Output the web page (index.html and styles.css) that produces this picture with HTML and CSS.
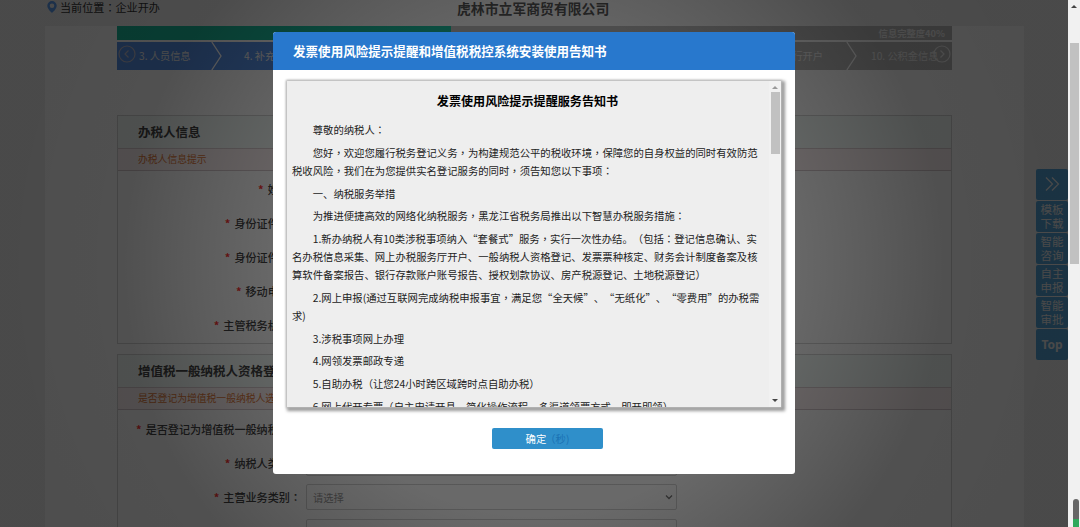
FILE: index.html
```html
<!DOCTYPE html>
<html lang="zh-CN">
<head>
<meta charset="utf-8">
<title>企业开办</title>
<link rel="stylesheet" href="styles.css">
</head>
<body>
<div class="window">
  <div class="page">
    <header class="top">
      <div class="crumb">
        <svg class="pin" viewBox="0 0 10 12"><path fill="#5a9cf0" fill-rule="evenodd" d="M5 0a4.700 4.700 0 0 0-4.700 4.700C.3 8 5 12 5 12s4.700-4 4.700-7.300A4.700 4.700 0 0 0 5 0zm0 2.400a2.300 2.300 0 1 1 0 4.600 2.300 2.300 0 0 1 0-4.600z"/></svg>
        <span>当前位置<span class="mid" lang="zh-TW">：</span>企业开办</span>
      </div>
      <h1 class="company">虎林市立军商贸有限公司</h1>
    </header>
    <main class="sheet">
      <div class="progress"><div class="done"></div><span class="percent">信息完整度40%</span></div>
      <nav class="steps">
        <div class="step active first">
          <svg class="circle" viewBox="0 0 18 18"><circle cx="9" cy="9" r="8"/><path d="M10.500 5.500 7 9l3.500 3.500"/></svg>
          <span>3. 人员信息</span>
        </div>
        <svg class="chevron" viewBox="0 0 12 28"><path class="chev-blue" d="M0 0h12v28H0z"/><path class="chev-line" d="M.8 0 10 14 .8 28"/></svg>
        <div class="step active second"><span>4. 补充信息</span></div>
        <div class="step ninth"><span>9. 银行开户</span></div>
        <svg class="chevron" viewBox="0 0 12 28"><path class="chev-gray" d="M0 0h12v28H0z"/><path class="chev-line" d="M.8 0 10 14 .8 28"/></svg>
        <div class="step last">
          <span>10. 公积金信息</span>
          <svg class="circle" viewBox="0 0 18 18"><circle cx="9" cy="9" r="8"/><path d="M7.500 5.500 11 9l-3.500 3.500"/></svg>
        </div>
      </nav>
      <section class="panel agent">
        <h2>办税人信息</h2>
        <p class="tip">办税人信息提示</p>
        <div class="rows">
          <div class="row"><label><i>*</i>姓名：</label></div>
          <div class="row"><label><i>*</i>身份证件号：</label></div>
          <div class="row"><label><i>*</i>身份证件号：</label></div>
          <div class="row"><label><i>*</i>移动电话：</label></div>
          <div class="row"><label><i>*</i>主管税务机关：</label></div>
        </div>
      </section>
      <section class="panel vat">
        <h2>增值税一般纳税人资格登记</h2>
        <p class="tip">是否登记为增值税一般纳税人选择</p>
        <div class="rows">
          <div class="row"><label><i>*</i>是否登记为增值税一般纳税人：</label></div>
          <div class="row"><label><i>*</i>纳税人类别：</label><div class="field"></div></div>
          <div class="row"><label><i>*</i>主营业务类别<span class="mid" lang="zh-TW">：</span></label><div class="field"><span>请选择</span><svg viewBox="0 0 8 6"><path d="M1 1.500 4 4.500 7 1.500"/></svg></div></div>
          <div class="row"><label></label><div class="field"></div></div>
        </div>
      </section>
    </main>
    <aside class="side">
      <div class="tool"><svg viewBox="0 0 16 16"><path d="M2 1.500 8.500 8 2 14.500M8 1.500 14.500 8 8 14.500"/></svg></div>
      <div class="tool">模板<br>下载</div>
      <div class="tool">智能<br>咨询</div>
      <div class="tool">自主<br>申报</div>
      <div class="tool">智能<br>审批</div>
      <div class="tool go-top">Top</div>
    </aside>
    <div class="mask">
      <div class="dialog">
        <div class="dialog-title">发票使用风险提示提醒和增值税税控系统安装使用告知书</div>
        <div class="notice">
          <div class="notice-text">
            <h3>发票使用风险提示提醒服务告知书</h3>
            <p>尊敬的纳税人<span class="mid" lang="zh-TW">：</span></p>
            <p>您好<span class="mid" lang="zh-TW">，</span>欢迎您履行税务登记义务<span class="mid" lang="zh-TW">，</span>为构建规范公平的税收环境<span class="mid" lang="zh-TW">，</span>保障您的自身权益的同时有效防范<br>税收风险<span class="mid" lang="zh-TW">，</span>我们在为您提供实名登记服务的同时<span class="mid" lang="zh-TW">，</span>须告知您以下事项<span class="mid" lang="zh-TW">：</span></p>
            <p>一、纳税服务举措</p>
            <p>为推进便捷高效的网络化纳税服务<span class="mid" lang="zh-TW">，</span>黑龙江省税务局推出以下智慧办税服务措施<span class="mid" lang="zh-TW">：</span></p>
            <p>1.新办纳税人有10类涉税事项纳入“套餐式”服务<span class="mid" lang="zh-TW">，</span>实行一次性办结。（包括<span class="mid" lang="zh-TW">：</span>登记信息确认、实<br>名办税信息采集、网上办税服务厅开户、一般纳税人资格登记、发票票种核定、财务会计制度备案及核<br>算软件备案报告、银行存款账户账号报告、授权划款协议、房产税源登记、土地税源登记）</p>
            <p>2.网上申报(通过互联网完成纳税申报事宜<span class="mid" lang="zh-TW">，</span>满足您“全天候”、“无纸化”、“零费用”的办税需<br>求)</p>
            <p>3.涉税事项网上办理</p>
            <p>4.网领发票邮政专递</p>
            <p>5.自助办税（让您24小时跨区域跨时点自助办税）</p>
            <p>6.网上代开专票（自主申请开具、简化操作流程、多渠道领票方式、即开即领）</p>
          </div>
          <div class="notice-bar"><span class="up"></span><span class="thumb"></span><span class="down"></span></div>
        </div>
        <button class="confirm">确定<span>（秒)</span></button>
      </div>
    </div>
  </div>
  <div class="page-bar">
    <span class="up"></span>
    <span class="thumb"></span>
    <span class="dock"><b></b></span>
  </div>
</div>
</body>
</html>
```
FILE: styles.css
```css
* { box-sizing: border-box; }
body { margin: 0; font-family: "Noto Sans CJK SC", "Noto Sans", sans-serif; color: #333; text-spacing-trim: space-all; }
h1, h2, h3, p { margin: 0; }
/* Colons and commas centred in their cell */
.mid { font-family: "Noto Sans CJK TC", sans-serif; }
.window { display: flex; width: 1080px; height: 527px; overflow: hidden; }
.page { position: relative; width: 1068px; height: 527px; overflow: hidden; background: #f0f0f0; }

.top { height: 26px; padding-left: 47px; display: flex; }
.crumb { width: 411px; display: flex; gap: 3px; font-size: 11.1px; line-height: 14px; white-space: nowrap; }
.pin { width: 10px; height: 12px; margin-top: 1px; }
.company { font-size: 13.85px; line-height: 16px; color: #555; white-space: nowrap; margin-left: -1px; }

.sheet { width: 979px; height: 501px; margin-left: 45px; padding: 0 72px; background: #fff; }
.progress { position: relative; height: 14px; background: #b8b8b8; }
.done { width: 40%; height: 14px; background: #1abc9c; }
.percent { position: absolute; right: 7px; top: 0; font-size: 9.3px; line-height: 14px; color: #eee; font-weight: bold; }
.steps { display: flex; height: 28px; margin-top: 1.5px; font-size: 10.2px; color: #eee; white-space: nowrap; }
.step { display: flex; align-items: center; background: #b8b8b8; }
.active { background: #5690e6; }
.first { width: 94px; gap: 3px; padding-left: 1px; }
.second { width: 314px; padding-left: 21px; }
.ninth { flex: 1; justify-content: flex-end; padding-right: 23px; }
.last { width: 94px; padding-left: 13px; }
.last .circle { margin-left: -5px; }
.circle { width: 18px; height: 18px; flex: none; fill: none; stroke: #bbc; stroke-width: 1.2; margin-top: -3px; }
.last .circle { stroke: #eee; }
.chevron { width: 12px; height: 28px; flex: none; }
.chev-blue { fill: #5690e6; }
.chev-gray { fill: #b8b8b8; }
.chev-line { fill: none; stroke: #fff; stroke-width: 1.3; }

.panel { border: 1px solid #d5d5d5; overflow: hidden; }
.agent { height: 229px; margin-top: 45.5px; }
.vat { height: 230px; margin-top: 10px; }
.panel h2 { height: 33px; padding-left: 20px; font-size: 12.5px; line-height: 31px; color: #444; background: #f6fdfa; border-bottom: 1px solid #dccfd2; }
.tip { height: 22px; padding-left: 20px; font-size: 9.8px; line-height: 20px; color: #e07838; background: #fff4f5; border-bottom: 1px solid #d5c8cc; }
.rows { padding-top: .5px; }
.vat .rows { padding-top: 2px; }
.row { height: 34.2px; display: flex; align-items: center; gap: 5px; font-size: 11.1px; font-weight: 500; color: #444; }
.row label { width: 183px; display: flex; justify-content: flex-end; white-space: nowrap; }
.row i { margin-right: 4px; color: #f33; font-style: normal; font-weight: bold; }
.field { width: 371px; height: 26px; padding: 0 3px 0 6px; display: flex; align-items: center; justify-content: space-between; border: 1px solid #d4d4d4; border-radius: 2px; font-size: 10.3px; font-weight: 400; color: #999; }
.field svg { width: 8px; height: 6px; fill: none; stroke: #777; stroke-width: 1.3; }

.side { position: absolute; right: 0; top: 169px; width: 32px; display: grid; gap: 1px; }
.tool { height: 31px; display: flex; align-items: center; justify-content: center; background: #55a4d8; border-radius: 2px; color: #eee; font-size: 11.5px; line-height: 14.3px; padding-bottom: 1px; }
.tool svg { width: 16px; height: 16px; fill: none; stroke: #eee; stroke-width: 1.2; }
.go-top { font: bold 12px "Noto Sans", sans-serif; }

.mask { position: absolute; inset: 0; padding: 32px 0 0 273px; background: radial-gradient(circle at 534px 264px, rgba(0,0,0,.59) 250px, rgba(0,0,0,.64) 335px, rgba(0,0,0,.685) 410px, rgba(0,0,0,.695) 520px); }
.dialog { width: 522px; height: 441.5px; background: #fff; border-radius: 3px; overflow: hidden; }
.dialog-title { height: 38px; padding-left: 20px; background: #2878cd; color: #fff; font-size: 12.56px; line-height: 38px; font-weight: bold; }
.notice { width: 494px; height: 326px; margin: 11px 0 0 14px; display: flex; overflow: hidden; background: #eee; box-shadow: 0 0 2px 1px #bbb, 2px 2px 3px 2px #999; }
.notice-text { width: 482px; padding: 11px 0 0 5px; font-size: 10.35px; line-height: 18px; color: #222; white-space: nowrap; }
.notice-text h3 { margin: 0 0 11px -5px; padding-right: 1px; text-align: center; font-size: 12.1px; line-height: 18px; color: #000; }
.notice-text p { text-indent: 2em; margin-bottom: 4.75px; }
.notice-bar { width: 12px; padding: 5px 1px; display: flex; flex-direction: column; align-items: center; background: #f1f1f1; }
.up { border: 3px solid transparent; border-top: 0; border-bottom: 3px solid #999; }
.down { margin-top: auto; border: 3px solid transparent; border-bottom: 0; border-top: 3px solid #444; }
.notice-bar .thumb { width: 9px; height: 62px; margin-top: 3px; background: #c1c1c1; }
.confirm { display: block; width: 111px; height: 21px; margin: 21px 0 0 219px; padding: 0; border: 0; border-radius: 2px; background: #2f8fca; color: #fff; font: 10.33px "Noto Sans CJK SC", sans-serif; line-height: 20px; }
.confirm span { color: #1b72b4; margin-left: -1px; }

.page-bar { width: 12px; height: 527px; padding-top: 5px; display: flex; flex-direction: column; align-items: center; background: #f1f1f1; }
.page-bar .up { border-bottom-color: #444; }
.page-bar .thumb { width: 9px; height: 221px; margin-top: 35px; background: #c1c1c1; }
.dock { width: 6px; height: 28px; margin-top: auto; margin-left: 4px; padding-top: 20px; border-radius: 3px 3px 0 0; background: #666; }
.dock b { display: block; height: 8px; background: #2fa85a; }
```
